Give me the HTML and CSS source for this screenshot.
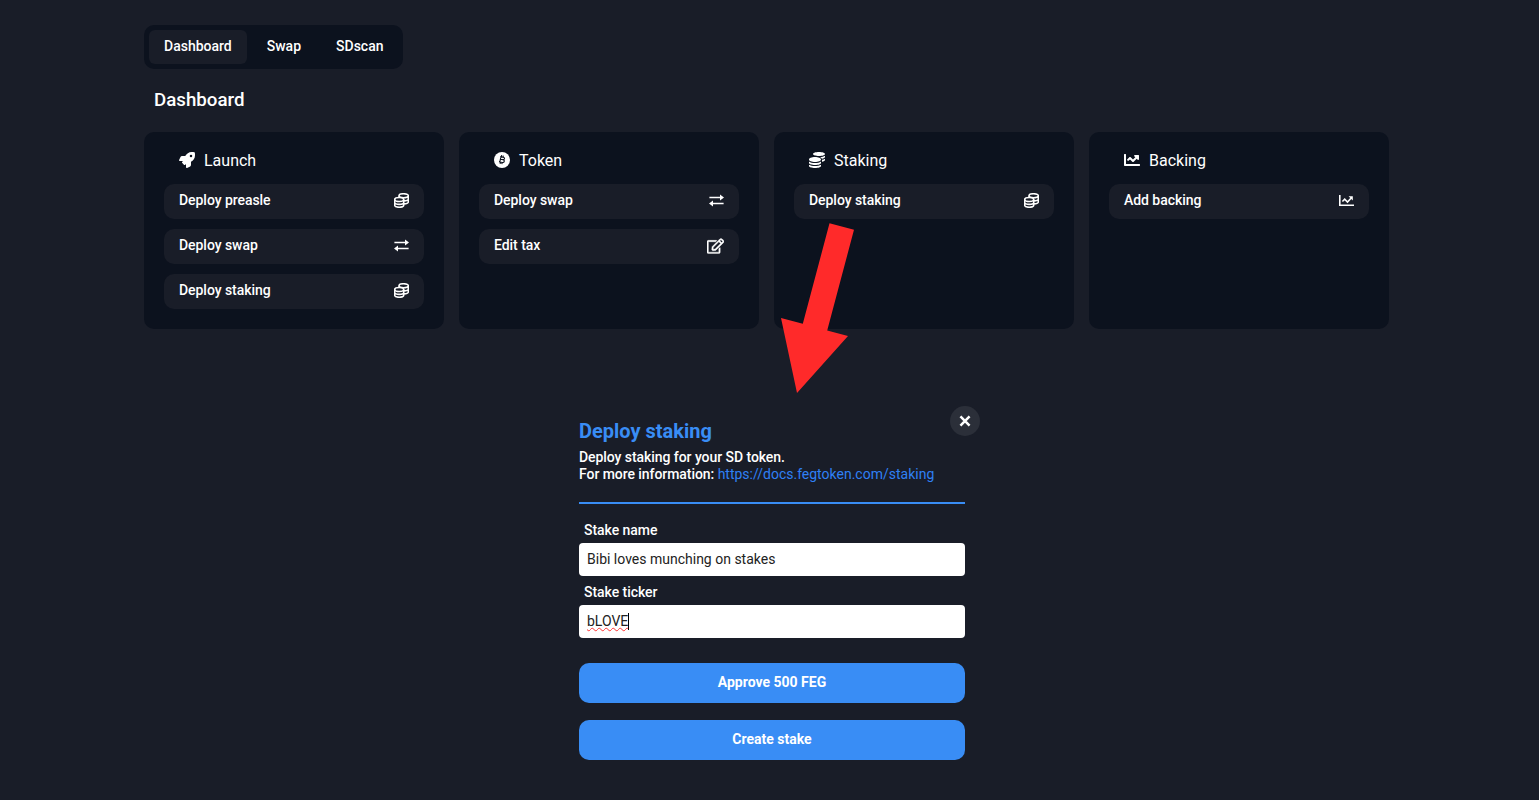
FILE: index.html
```html
<!DOCTYPE html>
<html lang="en">
<head>
<meta charset="utf-8">
<title>Dashboard</title>
<link rel="stylesheet" href="styles.css">
</head>
<body>
<svg class="sprite" aria-hidden="true">
  <symbol id="rocket" viewBox="0 0 512 512"><path d="M505.12 19.09c-1.19-5.53-6.66-11-12.21-12.19C460.72 0 435.51 0 410.41 0 307.18 0 245.27 55.2 199.05 128H94.84c-16.35.02-35.56 11.88-42.89 26.48L2.52 253.3A28.4 28.4 0 0 0 0 264a24 24 0 0 0 24 24h103.82l-22.48 22.47c-11.36 11.36-13 32.26 0 45.25l50.91 50.9c11.15 11.19 32.15 13.16 45.27 0L224 384.16V488a24 24 0 0 0 24 24 28.56 28.56 0 0 0 10.7-2.52l98.73-49.39c14.63-7.29 26.51-26.5 26.51-42.86V312.8C456.54 266.48 512 204.39 512 101.7c.08-25.2.08-50.4-6.88-82.61ZM384 168a40 40 0 1 1 40-40 40 40 0 0 1-40 40Z"/></symbol>
  <symbol id="bitcoin" viewBox="0 0 16 16"><circle cx="8" cy="8" r="8"/><path class="ink" d="M6.3 4.5 9 5.1c2.1.5 1.900 2.100.2 2.500 1.700.500 1.500 3.300-1 2.900l-3.200-.700M6.900 4.800 5.800 10M6.500 7.300l2.500.500M7.700 3.200l-.400 1.600M9.400 3.600 9 5M6.500 10.100l-.400 1.700M8.200 10.500l-.400 1.700"/></symbol>
  <symbol id="coins" viewBox="0 0 512 512"><path d="M0 405.3V448c0 35.3 86 64 192 64s192-28.7 192-64v-42.7C342.7 434.4 267.2 448 192 448S41.3 434.4 0 405.3zM320 128c106 0 192-28.7 192-64S426 0 320 0 128 28.7 128 64s86 64 192 64zM0 300.4V352c0 35.3 86 64 192 64s192-28.7 192-64v-51.6c-41.3 34-116.9 51.6-192 51.6S41.3 334.4 0 300.4zm416 11c57.3-11.1 96-31.7 96-55.4v-42.7c-23.2 16.4-57.3 27.6-96 34.5v63.6zM192 160C86 160 0 195.8 0 240s86 80 192 80 192-35.8 192-80-86-80-192-80zm219.3 56.3c60-10.8 100.7-32 100.7-56.3v-42.7c-35.5 25.1-96.5 38.6-160.7 41.8 29.5 14.3 51.2 33.5 60 57.2z"/></symbol>
  <symbol id="chart" viewBox="0 0 512 512"><path d="M496 384H64V80c0-8.84-7.16-16-16-16H16C7.16 64 0 71.16 0 80v336c0 17.67 14.33 32 32 32h464c8.84 0 16-7.16 16-16v-32c0-8.84-7.16-16-16-16zM464 96H345.94c-21.38 0-32.09 25.85-16.97 40.97l32.4 32.4L288 242.75l-73.37-73.37c-12.5-12.5-32.76-12.5-45.25 0l-68.69 68.69c-6.25 6.25-6.25 16.38 0 22.63l22.62 22.62c6.25 6.25 16.38 6.25 22.63 0L192 237.25l73.37 73.37c12.5 12.5 32.76 12.5 45.25 0l96-96 32.4 32.4c15.12 15.12 40.97 4.41 40.97-16.97V112c.01-8.84-7.15-16-16-16z"/></symbol>
  <symbol id="chart-thin" viewBox="0 0 15 15"><path class="line" d="M.8 2v10.2H15M3.4 8.5l2.3-2.3 2.8 2.8L12 5.3"/><path d="M9.600 3.200h4.200v4.300z"/></symbol>
  <symbol id="coins-thin" viewBox="0 0 15 15"><g class="line"><ellipse cx="5.2" cy="6.5" rx="4.5" ry="2"/><path d="M.7 6.5v5.800c0 2.600 9 2.600 9 0V6.500M.7 9.400c0 2.600 9 2.600 9 0M5 4.300V2.700C5 .1 14.300.1 14.300 2.700v6.200c0 1-1.400 1.700-4.400 2M5 2.800c0 2.500 9.300 2.500 9.300 0M9.900 7.900c3-.2 4.400-.9 4.400-2"/></g></symbol>
  <symbol id="swap" viewBox="0 0 15 15"><path class="line" d="M.4 4.500h12M2.600 10.500h12"/><path d="M11 1.500v6l4-3zM4 7.500v6l-4-3z"/></symbol>
  <symbol id="edit" viewBox="0 0 576 512"><path class="edit-path" d="M402.3 344.9l32-32c5-5 13.7-1.5 13.7 5.7V464c0 26.5-21.5 48-48 48H48c-26.5 0-48-21.5-48-48V112c0-26.5 21.5-48 48-48h273.5c7.1 0 10.7 8.6 5.7 13.7l-32 32c-1.5 1.5-3.5 2.3-5.7 2.3H48v352h352V350.5c0-2.1.8-4.1 2.3-5.6zm156.6-201.8L296.3 405.7l-90.4 10c-26.2 2.9-48.5-19.2-45.6-45.6l10-90.4L432.9 17.1c22.9-22.9 59.9-22.9 82.7 0l43.2 43.2c22.9 22.9 22.9 60 .1 82.8zM460.1 174L402 115.9 216.2 301.8l-7.3 65.3 65.3-7.3L460.1 174zm64.8-79.7l-43.2-43.2c-4.1-4.1-10.8-4.1-14.8 0L436 82l58.1 58.1 30.9-30.900c4-4.200 4-10.800-.1-14.900z"/></symbol>
</svg>
<main class="page">
  <nav class="tabs"><a class="tab active">Dashboard</a><a class="tab">Swap</a><a class="tab">SDscan</a></nav>
  <h1 class="heading">Dashboard</h1>
  <section class="cards">
    <article class="card">
      <h2 class="card-title"><svg class="icon-lg"><use href="#rocket"/></svg>Launch</h2>
      <a class="row">Deploy preasle<svg class="icon"><use href="#coins-thin"/></svg></a>
      <a class="row">Deploy swap<svg class="icon"><use href="#swap"/></svg></a>
      <a class="row">Deploy staking<svg class="icon"><use href="#coins-thin"/></svg></a>
    </article>
    <article class="card">
      <h2 class="card-title"><svg class="icon-lg"><use href="#bitcoin"/></svg>Token</h2>
      <a class="row">Deploy swap<svg class="icon"><use href="#swap"/></svg></a>
      <a class="row">Edit tax<svg class="icon icon-wide"><use href="#edit"/></svg></a>
    </article>
    <article class="card">
      <h2 class="card-title"><svg class="icon-lg"><use href="#coins"/></svg>Staking</h2>
      <a class="row">Deploy staking<svg class="icon"><use href="#coins-thin"/></svg></a>
    </article>
    <article class="card">
      <h2 class="card-title"><svg class="icon-lg"><use href="#chart"/></svg>Backing</h2>
      <a class="row">Add backing<svg class="icon"><use href="#chart-thin"/></svg></a>
    </article>
  </section>
  <section class="dialog">
    <button class="close" aria-label="Close"><svg class="cross" viewBox="0 0 10 10"><path d="M1.2 1.2l7.600 7.600M8.800 1.200 1.200 8.800"/></svg></button>
    <h2 class="dialog-title">Deploy staking</h2>
    <p class="intro">Deploy staking for your SD token.<br>For more information: <a class="link">https://docs.fegtoken.com/staking</a></p>
    <div class="form">
      <span class="label">Stake name</span>
      <div class="field">Bibi loves munching on stakes</div>
      <span class="label">Stake ticker</span>
      <div class="field"><span class="misspelled">bLOVE</span><span class="caret"></span></div>
      <button class="button">Approve 500 FEG</button>
      <button class="button">Create stake</button>
    </div>
  </section>
  <svg class="arrow" viewBox="0 0 70 171"><path d="M49.500.3 74 6.800 47.200 107.500 68 113 17 170 1 95 22.800 100.800z"/></svg>
</main>
</body>
</html>
```
FILE: styles.css
```css
* { box-sizing: border-box; }
body {
  margin: 0;
  background: #191d28;
  color: #fff;
  font: 500 14px/17px Roboto, sans-serif;
}
.sprite { position: absolute; width: 0; height: 0; }
.page { position: relative; width: 1245px; height: 800px; margin-left: 144px; padding-top: 25px; }
svg { fill: currentColor; }
.line { fill: none; stroke: currentColor; stroke-width: 1.6; }
.ink { fill: none; stroke: #0c121e; stroke-width: 1.1; }
.edit-path { stroke: currentColor; stroke-width: 12; }

.tabs { display: flex; gap: 5px; width: 259px; height: 44px; padding: 5px; background: #0c121e; border-radius: 10px; }
.tab { padding: 8px 15px; border-radius: 6px; }
.active { background: #191d28; }
.heading { margin: 20px 0 0 10px; font-size: 18.72px; font-weight: 500; line-height: 22px; }

.cards { display: flex; gap: 15px; margin-top: 21px; }
.card { display: flex; flex-direction: column; gap: 10px; width: 300px; height: 197px; padding: 18px 20px 20px; background: #0c121e; border-radius: 10px; }
.card-title { display: flex; align-items: center; gap: 9px; margin: 0 0 2px; padding-left: 15px; font-size: 16px; font-weight: 400; line-height: 22px; }
.icon-lg { width: 16px; height: 16px; margin-top: -2px; }
.row { display: flex; align-items: center; justify-content: space-between; height: 35px; padding: 0 15px 2px; background: #191d28; border-radius: 10px; letter-spacing: -.05px; }
.icon { width: 15px; height: 15px; overflow: visible; }
.icon-wide { width: 17px; height: 16px; margin-top: 1px; }

.dialog { display: flex; flex-direction: column; position: relative; width: 386px; margin: 91px 0 0 435px; }
.close { position: absolute; top: -14px; right: -15px; display: grid; place-items: center; width: 30px; height: 30px; padding: 0; border: 0; border-radius: 50%; background: #2b2f39; }
.cross { width: 12px; height: 12px; stroke: #fff; stroke-width: 2.1; }
.dialog-title { margin: 0; color: #398df5; font-size: 20px; font-weight: 700; line-height: 23px; }
.intro { margin: 6px 0 0; padding-bottom: 19px; border-bottom: 2px solid #398df5; letter-spacing: -.06px; }
.link { color: #2f80f5; font-weight: 400; letter-spacing: 0; }
.form { display: flex; flex-direction: column; padding-top: 18px; }
.label { padding-left: 5px; letter-spacing: -.05px; }
.field { display: flex; align-items: flex-start; height: 33px; margin: 4px 0 8px; padding: 8px; background: #fff; border-radius: 4px; color: #222; font-weight: 400; }
.misspelled { text-decoration: underline wavy #f33 1px; text-decoration-skip-ink: none; }
.caret { width: 1px; height: 17px; background: #000; }
.button { height: 40px; margin: 17px 0 0; padding: 0 0 2px; border: 0; border-radius: 10px; background: #398df5; color: #fff; font: 700 14px/17px Roboto, sans-serif; }

.arrow { position: absolute; left: 636px; top: 223px; width: 70px; height: 171px; overflow: visible; fill: #ff2a2a; }
```
